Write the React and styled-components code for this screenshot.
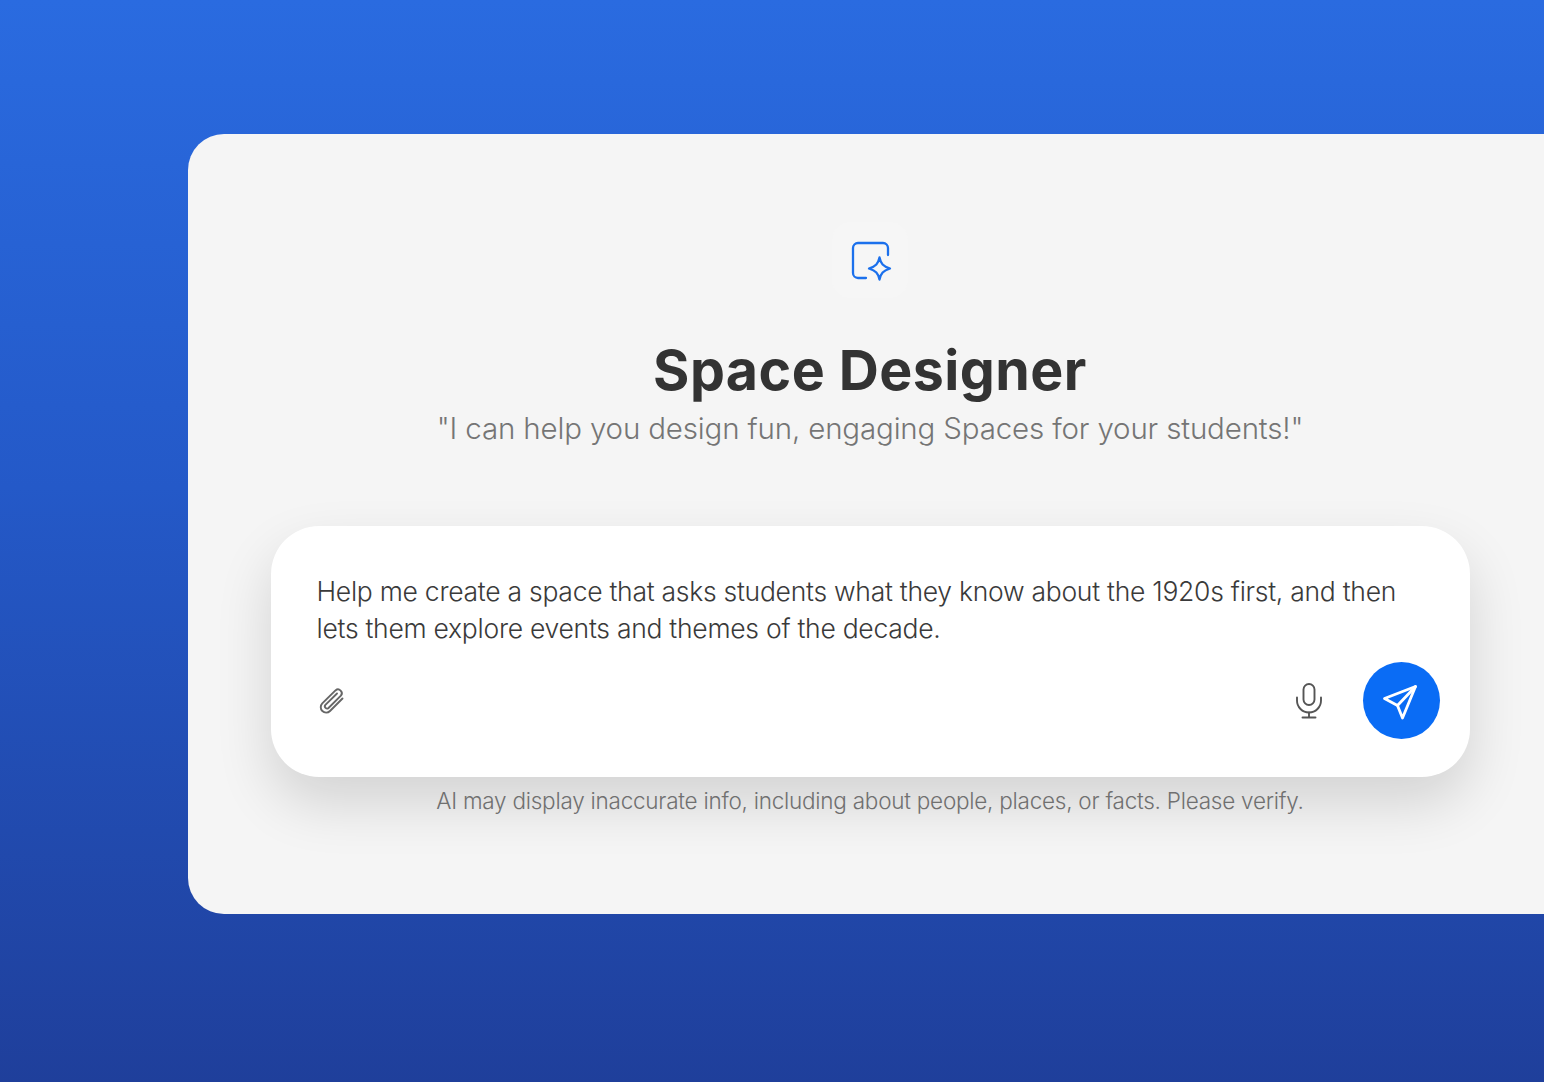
import React from 'react';
import styled, { createGlobalStyle } from 'styled-components';

const GlobalStyle = createGlobalStyle`
  html, body {
    margin: 0;
    padding: 0;
    height: 100%;
    overflow: hidden;
  }
  body {
    font-family: Inter, "Liberation Sans", sans-serif;
  }
`;

const Page = styled.div`
  box-sizing: border-box;
  width: 1544px;
  height: 1082px;
  padding: 134px 0 0 188px;
  overflow: hidden;
  background: linear-gradient(180deg, #2a6be0 0%, #2459c8 45%, #1f3f9b 100%);
`;

const Panel = styled.main`
  box-sizing: border-box;
  width: 1364px;
  height: 780px;
  padding-top: 88px;
  display: flex;
  flex-direction: column;
  align-items: center;
  background: #f5f5f5;
  border-radius: 36px 0 0 36px;
`;

const IconTile = styled.div`
  width: 76px;
  height: 76px;
  display: flex;
  align-items: center;
  justify-content: center;
  border-radius: 18px;
  background: #f6f6f6;
`;

const Title = styled.h1`
  margin: 36px 0 0;
  font-size: 55.5px;
  line-height: 72px;
  font-weight: 700;
  letter-spacing: 0.45px;
  color: #333333;
`;

const Subtitle = styled.p`
  margin: 3px 0 0;
  font-size: 29.5px;
  line-height: 38px;
  font-weight: 300;
  letter-spacing: -0.16px;
  color: #757575;
`;

const Composer = styled.section`
  box-sizing: border-box;
  width: 1199px;
  height: 251px;
  margin-top: 79px;
  padding: 47px 30px 38px 46px;
  display: flex;
  flex-direction: column;
  justify-content: space-between;
  background: #ffffff;
  border-radius: 48px;
  box-shadow: 0 26px 56px rgba(0, 0, 0, 0.14);
`;

const Prompt = styled.p`
  margin: 0;
  font-size: 26.5px;
  line-height: 37px;
  font-weight: 300;
  letter-spacing: -0.27px;
  color: #3a3a3a;
`;

const Actions = styled.div`
  display: flex;
  align-items: center;
  justify-content: space-between;
`;

const VoiceAndSend = styled.div`
  display: flex;
  align-items: center;
  gap: 39px;
`;

const IconButton = styled.button`
  padding: 0;
  display: flex;
  border: 0;
  background: none;
  cursor: pointer;
`;

const SendButton = styled(IconButton)`
  width: 77px;
  height: 77px;
  align-items: center;
  justify-content: center;
  border-radius: 50%;
  background: #0a6cf5;
`;

const Disclaimer = styled.p`
  margin: 11px 0 0;
  font-size: 22.5px;
  line-height: 25px;
  font-weight: 300;
  letter-spacing: -0.245px;
  color: #707070;
`;

function SparkleIcon() {
  return (
    <svg width="44" height="44" viewBox="0 0 44 44" fill="none" stroke="#1b70ec" strokeWidth="2.3" strokeLinecap="round" strokeLinejoin="round">
      <path d="M18 40h-8a5 5 0 0 1-5-5V10a5 5 0 0 1 5-5h25a5 5 0 0 1 5 5v7" />
      <path d="M31.500 19.500c1.300 6.200 3.600 8.800 10.500 11-6.900 2.200-9.200 4.800-10.500 11-1.300-6.200-3.600-8.800-10.500-11 6.900-2.200 9.200-4.800 10.500-11Z" />
    </svg>
  );
}

function ClipIcon() {
  return (
    <svg width="30" height="30" viewBox="0 0 30 30" fill="none" stroke="#666666" strokeWidth="1.9" strokeLinecap="round" strokeLinejoin="round">
      <path d="M25.500 12.500 13 25a5.400 5.400 0 0 1-7.700-7.600L18.500 4.400a3.800 3.800 0 0 1 5.400 5.300L11.500 22a2.200 2.200 0 0 1-3.100-3.100L20 7.500" />
    </svg>
  );
}

function MicIcon() {
  return (
    <svg width="30" height="38" viewBox="0 0 30 38" fill="none" stroke="#555555" strokeWidth="1.9" strokeLinecap="round" strokeLinejoin="round">
      <rect x="9.500" y="2" width="11" height="21" rx="5.500" />
      <path d="M3 15.500v3a12 12 0 0 0 24 0v-3" />
      <path d="M15 30.500v4.500" />
      <path d="M8.500 35.500h13" />
    </svg>
  );
}

function SendIcon() {
  return (
    <svg width="38" height="38" viewBox="0 0 38 38" fill="none" stroke="#ffffff" strokeWidth="2.8" strokeLinecap="round" strokeLinejoin="round">
      <path d="M33.500 4.500 2.500 16.500 15.500 23.500 20.500 36Z" />
      <path d="M33.500 4.500 15.500 23.500" />
    </svg>
  );
}

export default function App() {
  return (
    <>
      <GlobalStyle />
      <Page>
        <Panel>
          <IconTile>
            <SparkleIcon />
          </IconTile>
          <Title>Space Designer</Title>
          <Subtitle>"I can help you design fun, engaging Spaces for your students!"</Subtitle>
          <Composer>
            <Prompt>
              Help me create a space that asks students what they know about the 1920s first, and then
              <br />
              lets them explore events and themes of the decade.
            </Prompt>
            <Actions>
              <IconButton aria-label="Attach file">
                <ClipIcon />
              </IconButton>
              <VoiceAndSend>
                <IconButton aria-label="Voice input">
                  <MicIcon />
                </IconButton>
                <SendButton aria-label="Send">
                  <SendIcon />
                </SendButton>
              </VoiceAndSend>
            </Actions>
          </Composer>
          <Disclaimer>AI may display inaccurate info, including about people, places, or facts. Please verify.</Disclaimer>
        </Panel>
      </Page>
    </>
  );
}
